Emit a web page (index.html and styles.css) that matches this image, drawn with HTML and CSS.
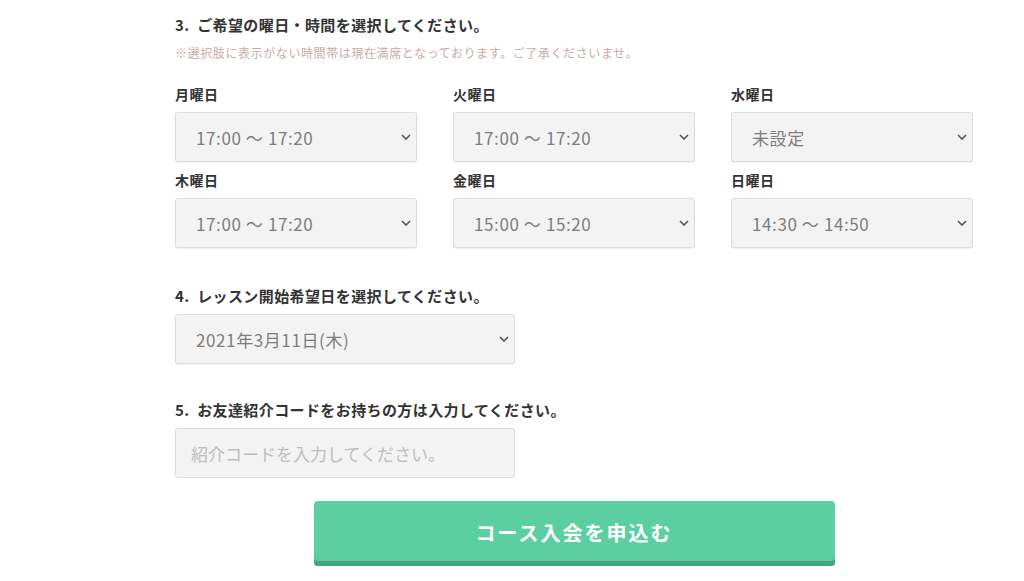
FILE: index.html
```html
<!DOCTYPE html>
<html lang="ja">
<head>
    <meta charset="UTF-8">
    <meta name="viewport" content="width=device-width, initial-scale=1.0">
    <title>コース入会申込</title>
    <link rel="stylesheet" href="styles.css">
</head>
<body>
    <form class="entry-form" id="entryForm">
        <section class="step step-schedule">
            <h2 class="step-title">3.&nbsp;&nbsp;ご希望の曜日・時間を選択してください。</h2>
            <p class="step-note">※選択肢に表示がない時間帯は現在満席となっております。ご了承くださいませ。</p>

            <div class="day-grid">
                <div class="day-cell">
                    <label for="mon">月曜日</label>
                    <div class="select-wrap">
                        <select id="mon" name="mon">
                            <option>17:00 ～ 17:20</option>
                            <option>未設定</option>
                        </select>
                        <svg class="chevron" viewBox="0 0 10 6" width="10" height="6"><path d="M1 1l4 4 4-4" fill="none" stroke="#555" stroke-width="1.6"/></svg>
                    </div>
                </div>
                <div class="day-cell">
                    <label for="tue">火曜日</label>
                    <div class="select-wrap">
                        <select id="tue" name="tue">
                            <option>17:00 ～ 17:20</option>
                            <option>未設定</option>
                        </select>
                        <svg class="chevron" viewBox="0 0 10 6" width="10" height="6"><path d="M1 1l4 4 4-4" fill="none" stroke="#555" stroke-width="1.6"/></svg>
                    </div>
                </div>
                <div class="day-cell">
                    <label for="wed">水曜日</label>
                    <div class="select-wrap">
                        <select id="wed" name="wed">
                            <option>未設定</option>
                        </select>
                        <svg class="chevron" viewBox="0 0 10 6" width="10" height="6"><path d="M1 1l4 4 4-4" fill="none" stroke="#555" stroke-width="1.6"/></svg>
                    </div>
                </div>
                <div class="day-cell">
                    <label for="thu">木曜日</label>
                    <div class="select-wrap">
                        <select id="thu" name="thu">
                            <option>17:00 ～ 17:20</option>
                            <option>未設定</option>
                        </select>
                        <svg class="chevron" viewBox="0 0 10 6" width="10" height="6"><path d="M1 1l4 4 4-4" fill="none" stroke="#555" stroke-width="1.6"/></svg>
                    </div>
                </div>
                <div class="day-cell">
                    <label for="fri">金曜日</label>
                    <div class="select-wrap">
                        <select id="fri" name="fri">
                            <option>15:00 ～ 15:20</option>
                            <option>未設定</option>
                        </select>
                        <svg class="chevron" viewBox="0 0 10 6" width="10" height="6"><path d="M1 1l4 4 4-4" fill="none" stroke="#555" stroke-width="1.6"/></svg>
                    </div>
                </div>
                <div class="day-cell">
                    <label for="sun">日曜日</label>
                    <div class="select-wrap">
                        <select id="sun" name="sun">
                            <option>14:30 ～ 14:50</option>
                            <option>未設定</option>
                        </select>
                        <svg class="chevron" viewBox="0 0 10 6" width="10" height="6"><path d="M1 1l4 4 4-4" fill="none" stroke="#555" stroke-width="1.6"/></svg>
                    </div>
                </div>
            </div>
        </section>

        <section class="step">
            <h2 class="step-title">4.&nbsp;&nbsp;レッスン開始希望日を選択してください。</h2>
            <div class="select-wrap wide">
                <select id="startDate" name="startDate">
                    <option>2021年3月11日(木)</option>
                    <option>2021年3月18日(木)</option>
                </select>
                <svg class="chevron" viewBox="0 0 10 6" width="10" height="6"><path d="M1 1l4 4 4-4" fill="none" stroke="#555" stroke-width="1.6"/></svg>
            </div>
        </section>

        <section class="step">
            <h2 class="step-title">5.&nbsp;&nbsp;お友達紹介コードをお持ちの方は入力してください。</h2>
            <input class="code-input" type="text" id="code" name="code" placeholder="紹介コードを入力してください。">
        </section>

        <div class="submit-row">
            <button type="submit" class="submit-btn">コース入会を申込む</button>
        </div>
    </form>
</body>
</html>
```

FILE: styles.css
```css
body {
    margin: 0;
    padding: 0;
    background-color: #fff;
    font-family: "Noto Sans CJK JP", "Noto Sans", sans-serif;
    color: #333;
}
.entry-form {
    width: 798px;
    margin-left: 175px;
    padding-top: 14px;
}
.step {
    margin-bottom: 35px;
}
.step-schedule {
    margin-bottom: 37px;
}
.step-title {
    margin: 0 0 8px;
    font-size: 15px;
    line-height: 21px;
    font-weight: bold;
    letter-spacing: 0.4px;
    color: #333;
}
.step-schedule .step-title {
    margin-bottom: 7px;
}
.step-note {
    margin: 9px 0 0;
    font-size: 12px;
    line-height: 17px;
    letter-spacing: 0.6px;
    color: #c9aaa8;
}
.day-grid {
    display: grid;
    grid-template-columns: repeat(3, 242px);
    column-gap: 36px;
    row-gap: 8px;
    margin-top: 23px;
}
.day-cell label {
    display: block;
    font-size: 14px;
    line-height: 20px;
    font-weight: bold;
    margin-bottom: 8px;
    letter-spacing: 0.5px;
}
.select-wrap {
    position: relative;
    width: 242px;
}
.select-wrap.wide {
    width: 340px;
}
select {
    appearance: none;
    -webkit-appearance: none;
    display: block;
    width: 100%;
    height: 50px;
    padding: 0 30px 0 20px;
    border: 1px solid #dcdcdc;
    border-radius: 3px;
    background-color: #f3f3f3;
    font-family: "Noto Sans CJK JP", "Noto Sans", sans-serif;
    font-size: 17px;
    letter-spacing: 0.6px;
    color: #7d7d7d;
    box-shadow: 0 1px 1px rgba(0, 0, 0, 0.06);
}
.chevron {
    position: absolute;
    right: 6px;
    top: 22px;
}
.code-input {
    display: block;
    box-sizing: border-box;
    width: 340px;
    height: 50px;
    padding: 0 15px;
    border: 1px solid #dcdcdc;
    border-radius: 3px;
    background-color: #f3f3f3;
    font-family: "Noto Sans CJK JP", "Noto Sans", sans-serif;
    font-size: 17px;
    color: #7d7d7d;
}
.code-input::placeholder {
    color: #bdbdbd;
}
.submit-row {
    display: flex;
    justify-content: center;
    margin-top: -12px;
}
.submit-btn {
    width: 521px;
    height: 65px;
    padding: 0 0 3px;
    border: none;
    border-radius: 4px;
    background-color: #5bcfa1;
    box-shadow: inset 0 -5px 0 #41a87f;
    color: #fff;
    font-family: "Noto Sans CJK JP", "Noto Sans", sans-serif;
    font-size: 20px;
    font-weight: bold;
    letter-spacing: 2px;
    cursor: pointer;
}
```
